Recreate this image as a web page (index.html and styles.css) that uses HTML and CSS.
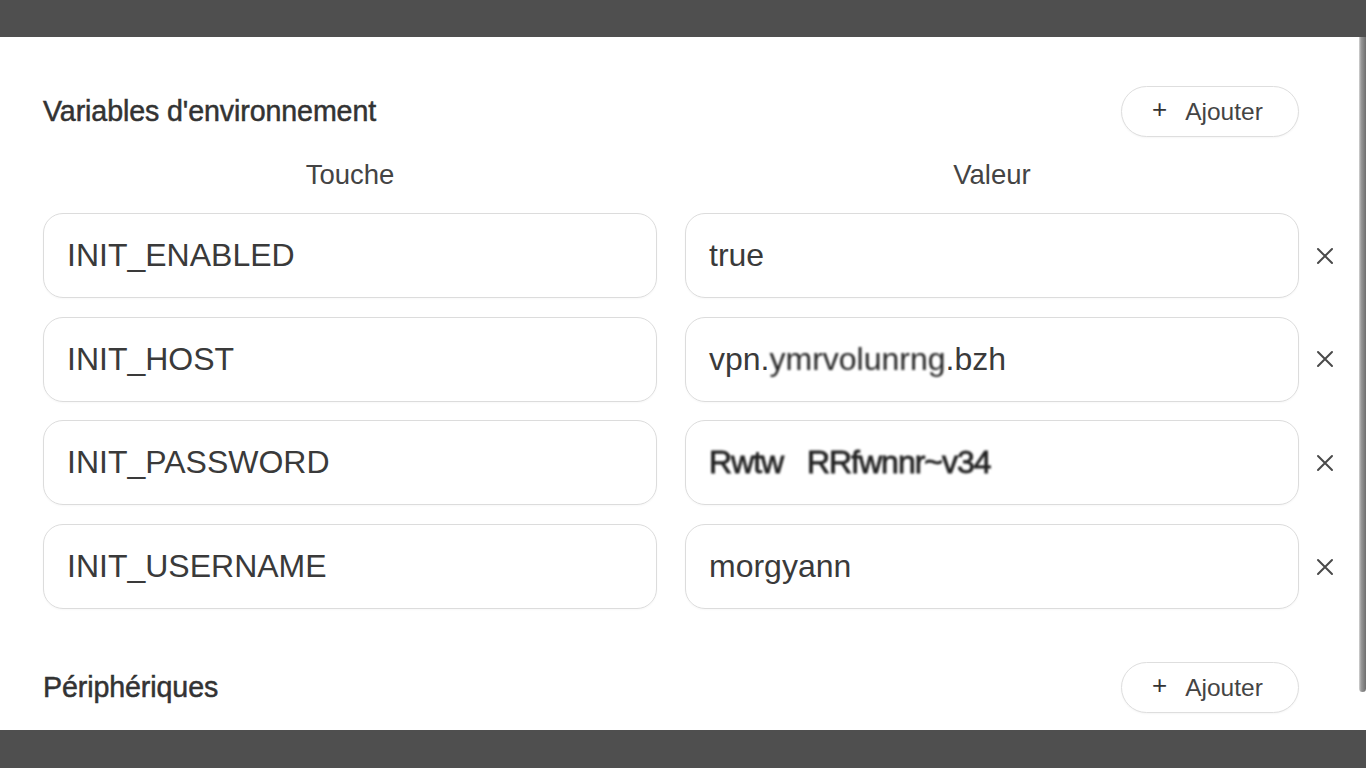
FILE: index.html
```html
<!DOCTYPE html>
<html lang="fr">
<head>
<meta charset="utf-8">
<title>Variables d'environnement</title>
<link rel="stylesheet" href="styles.css">
</head>
<body>
<div class="topbar"></div>
<main class="panel">
  <section class="section">
    <header class="section-head">
      <h2 class="section-title">Variables d'environnement</h2>
      <button class="add-btn"><span class="plus">+</span><span>Ajouter</span></button>
    </header>
    <div class="col-labels">
      <div class="col-label">Touche</div>
      <div class="col-label">Valeur</div>
    </div>
    <div class="rows">
      <div class="row">
        <div class="field">INIT_ENABLED</div>
        <div class="field">true</div>
        <button class="remove" aria-label="Supprimer"><svg viewBox="0 0 18 18" width="18" height="18"><path d="M2 2L16 16M16 2L2 16" stroke="#4a4a4a" stroke-width="2" stroke-linecap="round"/></svg></button>
      </div>
      <div class="row">
        <div class="field">INIT_HOST</div>
        <div class="field">vpn.<span class="blur">ymrvolunrng</span>.bzh</div>
        <button class="remove" aria-label="Supprimer"><svg viewBox="0 0 18 18" width="18" height="18"><path d="M2 2L16 16M16 2L2 16" stroke="#4a4a4a" stroke-width="2" stroke-linecap="round"/></svg></button>
      </div>
      <div class="row">
        <div class="field"><span>INIT_PASSWORD</span></div>
        <div class="field"><span class="blur heavy">Rwtw&nbsp;&nbsp; RRfwnnr~v34</span></div>
        <button class="remove" aria-label="Supprimer"><svg viewBox="0 0 18 18" width="18" height="18"><path d="M2 2L16 16M16 2L2 16" stroke="#4a4a4a" stroke-width="2" stroke-linecap="round"/></svg></button>
      </div>
      <div class="row">
        <div class="field">INIT_USERNAME</div>
        <div class="field">morgyann</div>
        <button class="remove" aria-label="Supprimer"><svg viewBox="0 0 18 18" width="18" height="18"><path d="M2 2L16 16M16 2L2 16" stroke="#4a4a4a" stroke-width="2" stroke-linecap="round"/></svg></button>
      </div>
    </div>
  </section>
  <section class="section second">
    <header class="section-head">
      <h2 class="section-title">Périphériques</h2>
      <button class="add-btn"><span class="plus">+</span><span>Ajouter</span></button>
    </header>
  </section>
  <div class="scroll-thumb"></div>
</main>
<div class="bottombar"></div>
</body>
</html>
```

FILE: styles.css
```css
html, body {
  margin: 0;
  padding: 0;
}
body {
  background: #4f4f4f;
  font-family: "Liberation Sans", Arial, sans-serif;
  color: #3a3a3a;
  width: 1366px;
  height: 768px;
  overflow: hidden;
}
.topbar {
  height: 37px;
  background: #4f4f4f;
}
.bottombar {
  height: 38px;
  background: #4f4f4f;
}
.panel {
  position: relative;
  height: 693px;
  background: #ffffff;
  overflow: hidden;
  padding: 49px 0 0 43px;
  box-sizing: border-box;
}
.section {
  width: 1256px;
}
.section.second {
  margin-top: 53px;
}
.section-head {
  display: flex;
  justify-content: space-between;
  align-items: center;
  height: 51px;
}
.section-title {
  margin: 0;
  font-size: 28.6px;
  font-weight: normal;
  color: #333;
  -webkit-text-stroke: 0.5px #333;
  letter-spacing: -0.1px;
}
.add-btn {
  display: flex;
  align-items: center;
  flex-shrink: 0;
  height: 51px;
  width: 178px;
  box-sizing: border-box;
  padding: 0 0 0 30px;
  border: 1.5px solid #dedede;
  border-radius: 26px;
  background: #fff;
  font-family: "Liberation Sans", Arial, sans-serif;
  font-size: 24.5px;
  color: #444;
  box-shadow: 0 1px 2px rgba(0,0,0,0.04);
}
.add-btn .plus {
  font-size: 26px;
  margin-right: 18px;
  color: #333;
  position: relative;
  top: -2px;
}
.col-labels {
  display: flex;
  gap: 28px;
  margin-top: 23px;
  height: 30px;
  align-items: center;
}
.col-label {
  width: 614px;
  flex-shrink: 0;
  text-align: center;
  font-size: 27.5px;
  color: #444;
}
.rows {
  display: flex;
  flex-direction: column;
  gap: 18.7px;
  margin-top: 23px;
}
.row {
  display: flex;
  align-items: center;
  gap: 28px;
  width: 1310px;
}
.field {
  width: 614px;
  flex-shrink: 0;
  height: 85px;
  box-sizing: border-box;
  border: 1.5px solid #dcdcdc;
  border-radius: 20px;
  padding-left: 23px;
  display: flex;
  align-items: center;
  font-size: 32px;
  color: #3a3a3a;
  box-shadow: 0 1px 2px rgba(0,0,0,0.03);
  white-space: pre;
}
.blur {
  filter: blur(1.2px);
  color: #222;
}
.blur.heavy {
  filter: blur(1px);
  letter-spacing: -1px;
  -webkit-text-stroke: 0.8px #222;
}
.remove {
  width: 52px;
  flex-shrink: 0;
  margin-left: -28px;
  height: 40px;
  border: none;
  background: none;
  padding: 0;
  display: flex;
  align-items: center;
  justify-content: center;
}
.scroll-thumb {
  position: absolute;
  top: 0;
  right: 0;
  width: 7px;
  height: 655px;
  border-radius: 0 0 4px 4px;
  background: linear-gradient(to right, #d4d4d4 0, #9a9a9a 2px, #6e6e6e 100%);
}
```
